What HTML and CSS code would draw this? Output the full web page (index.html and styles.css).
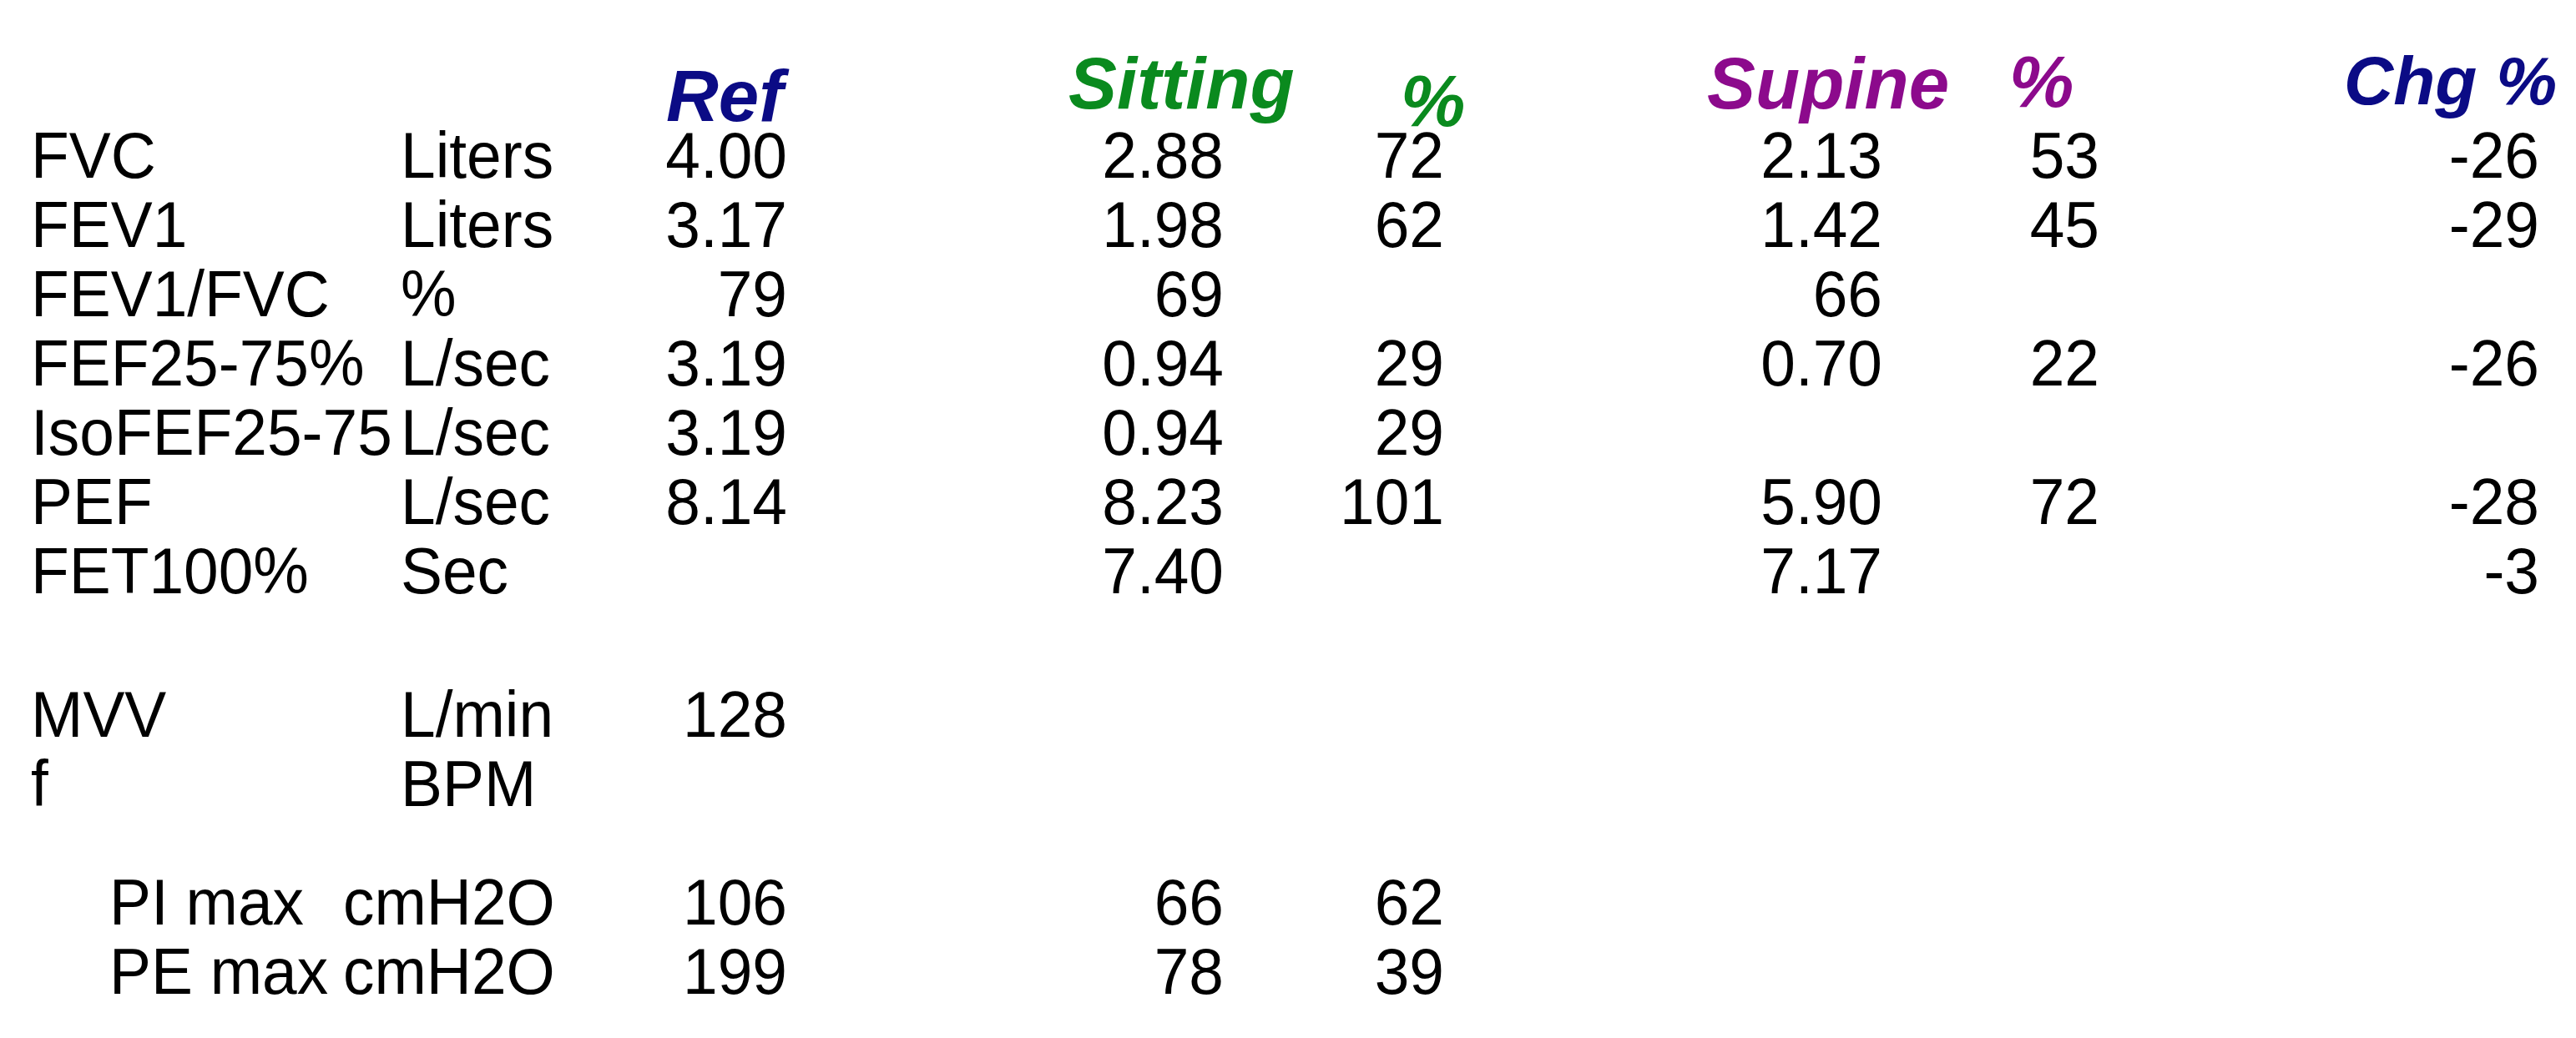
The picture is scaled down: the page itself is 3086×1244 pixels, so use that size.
FILE: index.html
```html
<!DOCTYPE html>
<html lang="en">
<head>
<meta charset="utf-8">
<title>Spirometry – Sitting vs Supine</title>
<link rel="stylesheet" href="styles.css">
</head>
<body>
<div class="sheet">
  <div class="head">
    <div class="h h-ref">Ref</div>
    <div class="h h-sit">Sitting</div>
    <div class="h h-sitp">%</div>
    <div class="h h-sup">Supine</div>
    <div class="h h-supp">%</div>
    <div class="h h-chg">Chg %</div>
  </div>

  <div class="group">
    <div class="row"><div class="c">FVC</div><div class="c">Liters</div><div class="c n">4.00</div><div class="c n">2.88</div><div class="c n">72</div><div class="c n">2.13</div><div class="c n">53</div><div class="c n">-26</div></div>
    <div class="row"><div class="c">FEV1</div><div class="c">Liters</div><div class="c n">3.17</div><div class="c n">1.98</div><div class="c n">62</div><div class="c n">1.42</div><div class="c n">45</div><div class="c n">-29</div></div>
    <div class="row"><div class="c">FEV1/FVC</div><div class="c">%</div><div class="c n">79</div><div class="c n">69</div><div class="c n"></div><div class="c n">66</div><div class="c n"></div><div class="c n"></div></div>
    <div class="row"><div class="c">FEF25-75%</div><div class="c">L/sec</div><div class="c n">3.19</div><div class="c n">0.94</div><div class="c n">29</div><div class="c n">0.70</div><div class="c n">22</div><div class="c n">-26</div></div>
    <div class="row"><div class="c">IsoFEF25-75</div><div class="c">L/sec</div><div class="c n">3.19</div><div class="c n">0.94</div><div class="c n">29</div><div class="c n"></div><div class="c n"></div><div class="c n"></div></div>
    <div class="row"><div class="c">PEF</div><div class="c">L/sec</div><div class="c n">8.14</div><div class="c n">8.23</div><div class="c n">101</div><div class="c n">5.90</div><div class="c n">72</div><div class="c n">-28</div></div>
    <div class="row"><div class="c">FET100%</div><div class="c">Sec</div><div class="c n"></div><div class="c n">7.40</div><div class="c n"></div><div class="c n">7.17</div><div class="c n"></div><div class="c n">-3</div></div>
  </div>

  <div class="group group-mvv">
    <div class="row"><div class="c">MVV</div><div class="c">L/min</div><div class="c n">128</div></div>
    <div class="row"><div class="c">f</div><div class="c">BPM</div></div>
  </div>

  <div class="group group-press">
    <div class="row indent"><div class="c">PI max</div><div class="c">cmH2O</div><div class="c n">106</div><div class="c n">66</div><div class="c n">62</div></div>
    <div class="row indent"><div class="c">PE max</div><div class="c">cmH2O</div><div class="c n">199</div><div class="c n">78</div><div class="c n">39</div></div>
  </div>
</div>
</body>
</html>
```

FILE: styles.css
```css
html, body {
  margin: 0;
  padding: 0;
  background: #ffffff;
}

body {
  font-family: "Liberation Sans", Arial, Helvetica, sans-serif;
  color: #000000;
}

.sheet {
  width: 3086px;
  height: 1244px;
  box-sizing: border-box;
  padding-left: 37px;
  overflow: hidden;
}

/* shared column template: label | unit | ref | sitting | % | supine | % | chg */
.head,
.row {
  display: grid;
  grid-template-columns: 443px 220px 243px 523px 264px 525px 260px 527px;
}

/* ---------- header ---------- */
.head {
  height: 145px;
  grid-template-rows: 145px;
  align-items: start;
}

.h {
  font-weight: bold;
  font-style: italic;
  font-size: 87px;
  line-height: 1;
  white-space: nowrap;
  grid-row: 1;
}

.h-ref  { grid-column: 3; padding-left: 98px;  padding-top: 71px; color: #0b0b85; }
.h-sit  { grid-column: 4; padding-left: 337px; padding-top: 56px; color: #0a8a1e; }
.h-sitp { grid-column: 5; padding-left: 212px; padding-top: 77px; color: #0a8a1e; }
.h-sup  { grid-column: 6; padding-left: 315px; padding-top: 56px; color: #8c0a8c; }
.h-supp { grid-column: 7; padding-left: 152px; padding-top: 54px; color: #8c0a8c; }
.h-chg  { grid-column: 8; padding-left: 293px; padding-top: 56px; font-size: 82px; color: #0b0b85; }

/* ---------- body rows ---------- */
.row {
  height: 83px;
  font-size: 78px;
  line-height: 83px;
}

.c {
  white-space: nowrap;
  transform: scaleX(0.96);
  transform-origin: left center;
}

.n {
  text-align: right;
  transform-origin: right center;
}

.group-mvv {
  margin-top: 89px;
}

.group-press {
  margin-top: 59px;
}

.row.indent {
  padding-left: 94px;
  grid-template-columns: 280px 289px 243px 523px 264px 525px 260px 527px;
}
```
